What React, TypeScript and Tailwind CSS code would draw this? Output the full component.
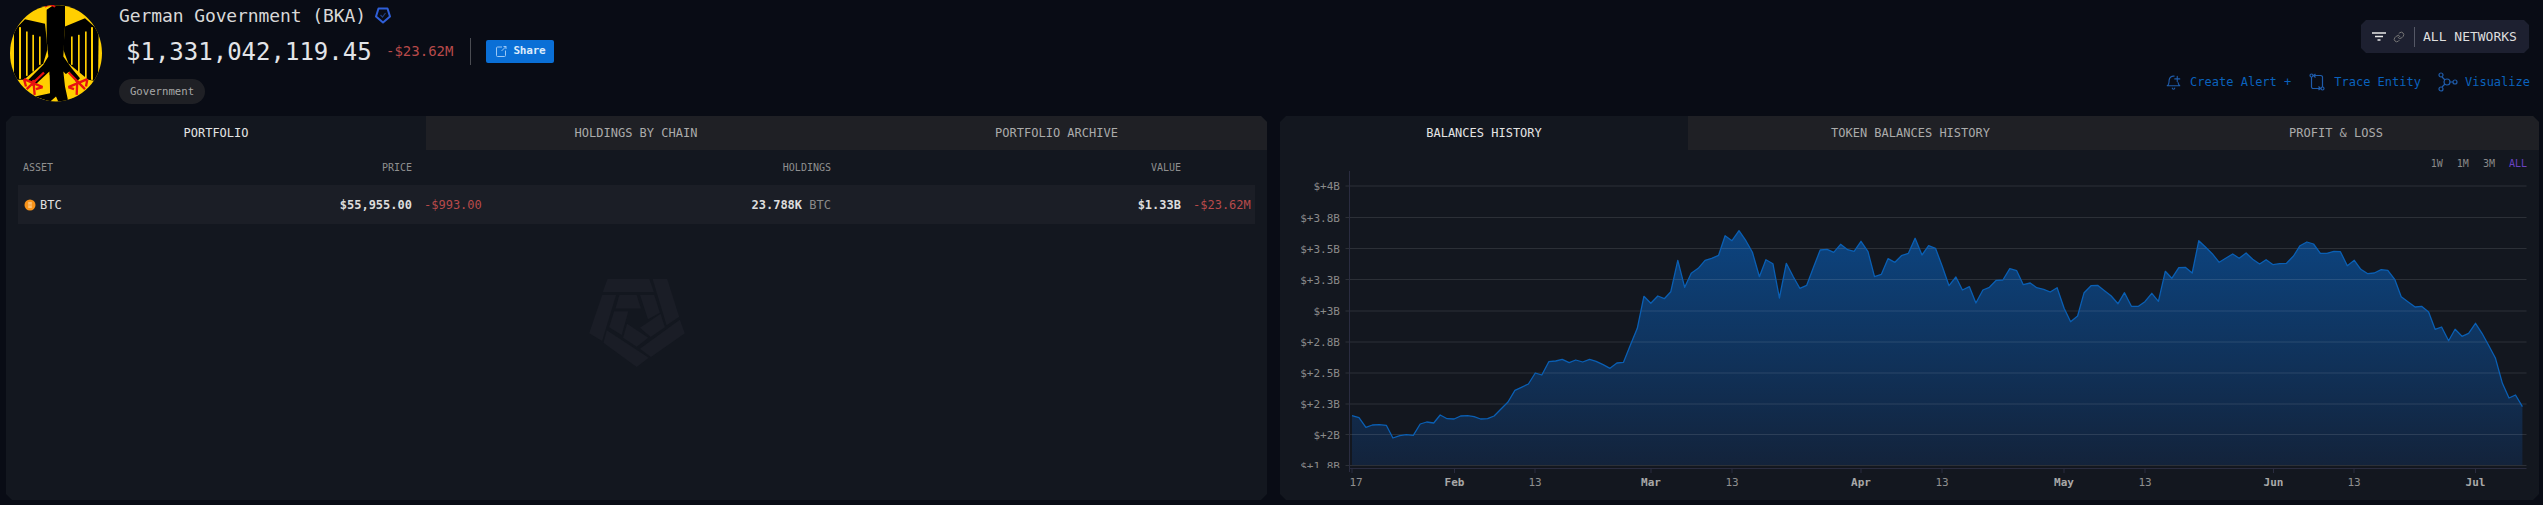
const z7: number[][] = [[201,347],[218,353],[235,382],[251,375],[268,374],[285,376],[301,414],[318,407],[334,404],[351,406],[368,372],[384,366],[401,369],[417,345],[434,356],[451,357],[467,348],[484,347],[500,350],[516,357],[533,356],[549,348],[566,327],[583,306],[600,271],[616,262],[633,252],[650,219],[666,225],[683,185],[700,183],[716,178],[733,188],[749,180],[766,186],[783,178],[799,184],[816,194],[833,205],[850,189],[866,187],[883,135],[900,85]];
const z5: number[][] = [[916,559],[933,580],[950,558],[966,566],[982,545],[999,451],[1016,532],[1032,490],[1049,475],[1066,451],[1082,445],[1099,436],[1115,377],[1132,392],[1149,362],[1166,392],[1182,427],[1199,500],[1215,449],[1232,461],[1248,564],[1265,460],[1282,500],[1298,535],[1315,526],[1332,470],[1348,420],[1365,418],[1381,427],[1398,403],[1415,419],[1431,424],[1448,394],[1465,425],[1481,500],[1498,493],[1514,446],[1531,457],[1547,437],[1564,430]];
const z6a: number[][] = [[37,385],[54,435],[70,407],[87,415],[104,470],[120,527],[137,501],[153,540],[170,530],[186,579],[203,540],[219,532],[236,511],[252,510],[269,476],[286,482],[302,524],[319,519],[335,533],[352,538],[368,546],[385,533],[402,595]];
const z8a: number[][] = [[418,65],[435,48]];
const z6b: number[][] = [[451,548],[468,527],[484,526],[501,542],[517,557],[534,581],[550,548],[567,589],[584,589],[600,575],[617,550],[633,574],[650,484],[666,505],[683,473],[699,472],[716,489],[732,392],[749,412],[765,431],[782,457],[798,445],[815,432],[831,445],[848,429],[864,448],[881,462],[897,449],[914,464],[930,461],[947,460],[964,438],[980,407],[997,396],[1013,402],[1030,430],[1046,430],[1063,424],[1079,425],[1096,467],[1113,451],[1129,478],[1146,491],[1162,489],[1179,479],[1195,481],[1212,508],[1228,560],[1245,576],[1262,591],[1278,589]];
const z8b: number[][] = [[1295,36],[1311,88],[1327,81],[1344,122],[1360,88],[1377,109],[1393,100],[1410,70],[1426,100],[1443,138],[1459,175],[1476,250],[1492,294],[1508,285],[1525,320]];

const X0 = 1280;
const Y0 = 171;
const fmt = (n: number) => n.toFixed(1);
const pts: [number, number][] = [
  ...z7.map(([x, y]) => [1270 + x / 2.45 - X0, 300 + y / 3 - Y0] as [number, number]),
  ...z5.map(([x, y]) => [1270 + x / 2.45 - X0, 110 + y / 3 - Y0] as [number, number]),
  ...z6a.map(([x, y]) => [1900 + x / 2.45 - X0, 110 + y / 3 - Y0] as [number, number]),
  ...z8a.map(([x, y]) => [1900 + x / 2.45 - X0, 300 + y / 3 - Y0] as [number, number]),
  ...z6b.map(([x, y]) => [1900 + x / 2.45 - X0, 110 + y / 3 - Y0] as [number, number]),
  ...z8b.map(([x, y]) => [1900 + x / 2.45 - X0, 300 + y / 3 - Y0] as [number, number]),
];
const linePath = pts.map((p, i) => `${i ? "L" : "M"}${fmt(p[0])} ${fmt(p[1])}`).join(" ");
const areaPath = `${linePath} L${fmt(pts[pts.length - 1][0])} ${465 - Y0} L${fmt(pts[0][0])} ${465 - Y0} Z`;

const yTicks: [string, number][] = [["$+4B",186],["$+3.8B",217.5],["$+3.5B",248.5],["$+3.3B",279.5],["$+3B",311],["$+2.8B",342],["$+2.5B",373],["$+2.3B",404],["$+2B",434.5],["$+1.8B",465.5]];
const xTicks: [string, number, boolean][] = [["17",1352,false],["Feb",1454.5,true],["13",1535,false],["Mar",1651,true],["13",1732,false],["Apr",1861,true],["13",1942,false],["May",2064,true],["13",2145,false],["Jun",2273.5,true],["13",2354,false],["Jul",2475.5,true]];

const chamfer = "[clip-path:polygon(6px_0,calc(100%_-_6px)_0,100%_6px,100%_calc(100%_-_6px),calc(100%_-_6px)_100%,6px_100%,0_calc(100%_-_6px),0_6px)]";

function Eagle() {
  return (
    <svg viewBox="30 16 276 290" className="w-[92px] h-[97px] shrink-0">
      <defs>
        <clipPath id="eagle-c"><ellipse cx="168" cy="160" rx="138" ry="145" /></clipPath>
      </defs>
      <g clipPath="url(#eagle-c)">
        <rect x="30" y="10" width="280" height="300" fill="#ffcf00" />
        <polygon fill="#000" points="135,72 75,58 42,92 42,240 72,240 130,190 142,150 140,120" />
        <polygon fill="#000" points="195,80 255,55 296,92 294,245 265,240 205,190 190,150 192,120" />
        <rect x="57" y="82" width="6" height="155" fill="#ffcf00" />
        <rect x="78" y="95" width="5" height="133" fill="#ffcf00" />
        <rect x="97" y="105" width="5" height="110" fill="#ffcf00" />
        <rect x="117" y="110" width="5" height="85" fill="#ffcf00" />
        <rect x="273" y="82" width="6" height="158" fill="#ffcf00" />
        <rect x="255" y="95" width="5" height="140" fill="#ffcf00" />
        <rect x="234" y="105" width="5" height="118" fill="#ffcf00" />
        <rect x="213" y="110" width="5" height="85" fill="#ffcf00" />
        <polygon fill="#000" points="140,30 160,16 195,16 195,80 190,170 215,205 240,235 225,250 190,215 195,260 205,306 175,306 168,290 150,306 105,290 150,280 148,215 100,260 85,240 130,195 145,170 140,120" />
        <polygon fill="#ffcf00" points="148,225 150,275 115,285 105,270" />
        <polygon fill="#ffcf00" points="195,225 208,215 240,265 215,295 205,295" />
        <path d="M135 22 C140 14 160 14 165 22" stroke="#e01010" strokeWidth="5" fill="none" />
        <g stroke="#e81010" strokeWidth="7" fill="none">
          <path d="M132 218 L80 268 M72 238 L128 262 M100 240 L104 285 M72 238 L78 260 M128 262 L108 268" />
          <path d="M206 218 L255 268 M262 238 L205 262 M232 240 L230 285 M262 238 L258 260 M205 262 L222 268" />
        </g>
      </g>
    </svg>
  );
}

function Tabs({ labels, widths }: { labels: string[]; widths: string[] }) {
  return (
    <div className="flex h-[34px] text-[12px]">
      {labels.map((l, i) => (
        <div
          key={l}
          className={`${widths[i]} flex items-center justify-center ${i === 0 ? "text-[#e4e4e4]" : "bg-[#1f2025] text-[#ababab]"}`}
        >
          {l}
        </div>
      ))}
    </div>
  );
}

const Red = "text-[#b84a4a]";

function Watermark() {
  const polys = [
    "202,93 328,93 342,132 188,132",
    "338,93 382,93 418,207 380,232",
    "186,141 228,141 186,280 147,256",
    "200,247 326,330 290,358 190,285",
    "420,216 435,256 333,328 300,303",
    "238,141 290,141 303,182 226,182",
    "300,141 343,141 360,195 324,214",
    "362,198 375,238 332,268 300,240",
    "261,228 325,270 290,297 249,270",
    "222,190 265,190 245,262 207,238",
  ];
  return (
    <svg viewBox="147 93 288 265" className="w-[96px] h-[88px]">
      {polys.map((p) => <polygon key={p} points={p} fill="#1a1d26" />)}
    </svg>
  );
}

export default function App() {
  const rowGrid = "grid grid-cols-[150px_244px_419px_350px_1fr] mx-3";
  return (
    <div className="w-[2543px] h-[505px] overflow-hidden bg-[#090c15] flex flex-col font-['DejaVu_Sans_Mono',monospace] text-[#e4e4e4]">
      <header className="h-[116px] flex justify-between shrink-0">
        <div className="flex pl-[10px] pt-[5px]">
          <Eagle />
          <div className="ml-[17px]">
            <div className="flex items-center h-[20px] text-[18px] text-[#d8d8d8]">
              <span className="tracking-[-0.1px]">German Government (BKA)</span>
              <svg viewBox="0 0 16 17" className="w-[16px] h-[17px] ml-[9px]" fill="none">
                <path d="M3.5 1.5 H12.5 L15 9.5 L8 15.5 L1 9.5 Z" stroke="#2f5fd8" strokeWidth="2" strokeLinejoin="round" />
                <path d="M5.5 8 L7.5 10 L10.5 6" stroke="#1f3f80" strokeWidth="1.2" />
              </svg>
            </div>
            <div className="flex items-center h-[23px] mt-[15px] pl-[7px]">
              <span className="text-[24px] text-[#e2e4e8] w-[260px]">$1,331,042,119.45</span>
              <span className={`text-[14px] ${Red}`}>-$23.62M</span>
              <span className="w-px h-[27px] bg-[#4a4c52] ml-[17px]" />
              <button className="ml-[15px] h-[23px] w-[68px] rounded-[2px] bg-[#0a6fd6] flex items-center justify-center gap-[6px] text-[11px] font-bold text-[#dcebfb]">
                <svg viewBox="0 0 12 12" className="w-[12px] h-[13px]" fill="none" stroke="#9cc8f5" strokeWidth="1">
                  <path d="M7 1.5 H2.5 A1 1 0 0 0 1.5 2.5 V10 A1 1 0 0 0 2.5 11 H9.5 A1 1 0 0 0 10.5 10 V5" />
                  <path d="M6.5 5.5 L11 1 M8.5 1 H11 V3.5" />
                </svg>
                <span className="tracking-[-0.2px]">Share</span>
              </button>
            </div>
            <div className="mt-[16px] w-[86px] h-[25px] rounded-full bg-[#1f2025] flex items-center justify-center text-[10.67px] text-[#a8a8a8]">
              Government
            </div>
          </div>
        </div>
        <div className="flex flex-col items-end pt-[20px]">
          <div className={`mr-[14px] w-[168px] h-[33px] bg-[#1d2030] flex items-center pl-[11px] [clip-path:polygon(5px_0,calc(100%_-_5px)_0,100%_5px,100%_calc(100%_-_5px),calc(100%_-_5px)_100%,5px_100%,0_calc(100%_-_5px),0_5px)]`}>
            <svg viewBox="0 0 14 9" className="w-[14px] h-[9px]" fill="none" stroke="#e8e8e8" strokeWidth="1.4">
              <path d="M0 1 H14 M3 4.5 H11 M5.5 8 H8.5" />
            </svg>
            <svg viewBox="0 0 24 24" className="w-[12px] h-[12px] ml-[7px]" fill="none" stroke="#777" strokeWidth="2" strokeLinecap="round">
              <path d="M10 13a5 5 0 0 0 7.5.5l3-3a5 5 0 0 0-7-7l-1.7 1.7" />
              <path d="M14 11a5 5 0 0 0-7.5-.5l-3 3a5 5 0 0 0 7 7l1.7-1.7" />
            </svg>
            <span className="w-px h-[20px] bg-[#555866] ml-[9px]" />
            <span className="ml-[8px] text-[13px] text-[#dedede]">ALL NETWORKS</span>
          </div>
          <div className="flex items-center h-[24px] mt-[17px] mr-[13px] text-[12px] text-[#0a62bd]">
            <svg viewBox="0 0 24 24" className="w-[15px] h-[18px]" fill="none" stroke="#1f5cab" strokeWidth="1.8" strokeLinecap="round" strokeLinejoin="round">
              <path d="M13 2.6 A7 7 0 0 0 5 9 c0 7-3 9-3 9h20s-2-1.500-2.700-5" />
              <path d="M10 21.500a2 2 0 0 0 4 0" />
              <path d="M18 3v8 M14 7h8" />
            </svg>
            <span className="ml-[9px]">Create Alert +</span>
            <svg viewBox="0 0 16 18" className="w-[16px] h-[18px] ml-[18px]" fill="none" stroke="#1f5cab" strokeWidth="1.2">
              <circle cx="2.500" cy="2.500" r="1.500" />
              <circle cx="13.500" cy="15.500" r="1.500" />
              <path d="M2.500 4 V13 A2 2 0 0 0 4.500 15.500 H11.500 M9.500 13.500 L11.500 15.500 L9.500 17" />
              <path d="M13.500 14 V5 A2 2 0 0 0 11.500 2.500 H4.500 M6.500 1 L4.500 2.500 L6.500 4.500" />
            </svg>
            <span className="ml-[9px]">Trace Entity</span>
            <svg viewBox="0 0 20 20" className="w-[20px] h-[20px] ml-[17px]" fill="none" stroke="#1f5cab" strokeWidth="1.2">
              <circle cx="3" cy="3" r="2" />
              <circle cx="3" cy="17" r="2" />
              <circle cx="9" cy="10" r="3" />
              <circle cx="17" cy="10" r="2" />
              <path d="M4 5 L7 8 M4 15 L7 12 M12 10 H15" />
            </svg>
            <span className="ml-[7px]">Visualize</span>
          </div>
        </div>
      </header>

      <main className="flex px-[6px] h-[384px] pr-[4px]">
        <section className={`w-[1261px] bg-[#13171f] flex flex-col ${chamfer}`}>
          <Tabs labels={["PORTFOLIO", "HOLDINGS BY CHAIN", "PORTFOLIO ARCHIVE"]} widths={["w-[420px]", "w-[420px]", "flex-1"]} />
          <div className={`${rowGrid} h-[35px] items-center text-[10px] text-[#8f8f8f]`}>
            <div className="pl-[5px]">ASSET</div>
            <div className="text-right">PRICE</div>
            <div className="text-right">HOLDINGS</div>
            <div className="text-right">VALUE</div>
            <div />
          </div>
          <div className={`${rowGrid} h-[39px] items-center text-[12px] bg-[#1b1e26]`}>
            <div className="pl-[6px] flex items-center gap-[4px]">
              <svg viewBox="0 0 12 12" className="w-[12px] h-[12px]">
                <circle cx="6" cy="6" r="5.500" fill="#f7931a" />
                <path d="M5 3 V9 M7 3 V9 M4.500 4 H7.500 M4.500 8 H7.500" stroke="#ffd9a6" strokeWidth="0.8" />
              </svg>
              <span className="text-[#e0e0e0]">BTC</span>
            </div>
            <div className="text-right font-bold text-[#dcdcdc]">$55,955.00</div>
            <div className="flex justify-between pl-[12px]">
              <span className={Red}>-$993.00</span>
              <span><span className="font-bold text-[#dcdcdc]">23.788K</span> <span className="text-[#8a8a8a]">BTC</span></span>
            </div>
            <div className="text-right font-bold text-[#dcdcdc]">$1.33B</div>
            <div className={`pl-[12px] ${Red}`}>-$23.62M</div>
          </div>
          <div className="flex justify-center mt-[55px]">
            <Watermark />
          </div>
        </section>

        <section className={`ml-[13px] w-[1259px] bg-[#13171f] flex flex-col ${chamfer}`}>
          <Tabs labels={["BALANCES HISTORY", "TOKEN BALANCES HISTORY", "PROFIT & LOSS"]} widths={["w-[408px]", "w-[445px]", "flex-1"]} />
          <div className="h-[21px] flex justify-end items-center gap-[14px] pr-[12px] pt-[5px] text-[10px] text-[#8a8a8a]">
            <span>1W</span>
            <span>1M</span>
            <span>3M</span>
            <span className="text-[#6a42c2]">ALL</span>
          </div>
          <svg viewBox="0 0 1259 329" className="w-[1259px] h-[329px] block font-['DejaVu_Sans_Mono',monospace]">
            <defs>
              <linearGradient id="area" x1="0" y1="60" x2="0" y2="294" gradientUnits="userSpaceOnUse">
                <stop offset="0" stopColor="#0c4480" />
                <stop offset="1" stopColor="#13233b" />
              </linearGradient>
              <clipPath id="ylabels"><rect x="0" y="0" width="69" height="297" /></clipPath>
            </defs>
            <path d={areaPath} fill="url(#area)" />
            {yTicks.map(([l, y]) => (
              <line key={l} x1={1345.5 - X0} x2={2526.5 - X0} y1={y - Y0} y2={y - Y0} stroke="#ffffff" strokeOpacity="0.11" />
            ))}
            <path d={linePath} fill="none" stroke="#0a5fb4" strokeWidth="1.300" strokeLinejoin="round" />
            <line x1={69.5} x2={69.5} y1={0} y2={301} stroke="#2a2c40" />
            <line x1={69} x2={2526.5 - X0} y1={297.5} y2={297.5} stroke="#2a2c40" />
            <g clipPath="url(#ylabels)">
              {yTicks.map(([l, y]) => (
                <text key={l} x={1340 - X0} y={y - Y0 + 4} textAnchor="end" fontSize="11" fill="#8a8a8a">{l}</text>
              ))}
            </g>
            {xTicks.map(([l, x, b], i) => (
              <g key={i}>
                <line x1={x - X0} x2={x - X0} y1={298} y2={302} stroke="#2a2c40" />
                <text x={x - X0 + (i === 0 ? 4 : 0)} y={315} textAnchor="middle" fontSize="11" fontWeight={b ? 700 : 400} fill={b ? "#a8a8a8" : "#8f8f8f"}>{l}</text>
              </g>
            ))}
          </svg>
        </section>
      </main>
    </div>
  );
}
